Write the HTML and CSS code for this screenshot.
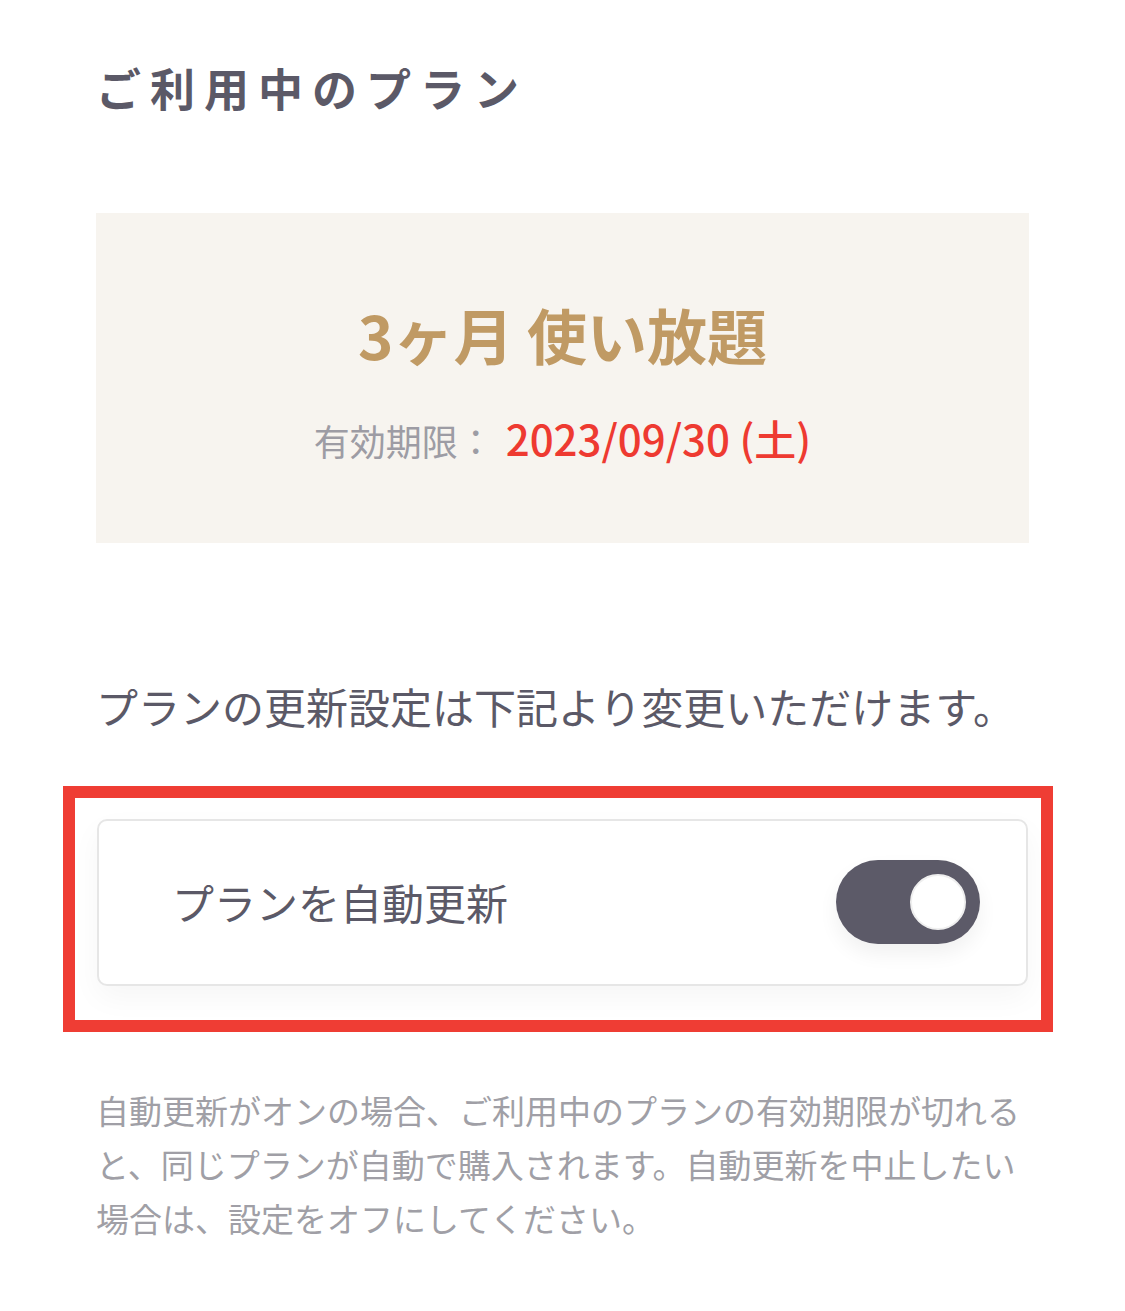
FILE: index.html
```html
<!DOCTYPE html>
<html lang="ja">

<head>
    <meta charset="UTF-8">
    <meta name="viewport" content="width=device-width, initial-scale=1.0">
    <title>ご利用中のプラン</title>
    <link rel="stylesheet" href="styles.css">
</head>

<body>
    <div class="page">
        <h1 class="page-title">ご利用中のプラン</h1>

        <div class="plan-box">
            <div class="plan-name">3ヶ月 使い放題</div>
            <div class="plan-expire">
                <span class="expire-label">有効期限：</span>
                <span class="expire-date">2023/09/30 (土)</span>
            </div>
        </div>

        <p class="lead">プランの更新設定は下記より変更いただけます。</p>

        <div class="highlight">
            <div class="setting-card">
                <span class="setting-label">プランを自動更新</span>
                <div class="toggle on">
                    <div class="toggle-knob"></div>
                </div>
            </div>
        </div>

        <p class="note">自動更新がオンの場合、ご利用中のプランの有効期限が切れると、同じプランが自動で購入されます。自動更新を中止したい場合は、設定をオフにしてください。</p>
    </div>
</body>

</html>
```

FILE: styles.css
```css
body {
    font-family: "Noto Sans CJK JP", "Noto Sans", sans-serif;
    background-color: #fff;
    margin: 0;
    padding: 0;
}

.page {
    padding: 0 96px 40px;
}

.page-title {
    margin: 0;
    padding-top: 58px;
    font-size: 45px;
    line-height: 60px;
    font-weight: 700;
    letter-spacing: 9px;
    color: #5b5967;
}

.plan-box {
    margin-top: 95px;
    padding: 81px 0 73px;
    background-color: #f7f4ef;
    text-align: center;
}

.plan-name {
    font-size: 60px;
    line-height: 80px;
    font-weight: 700;
    color: #c09a64;
}

.plan-expire {
    margin-top: 34px;
    display: flex;
    justify-content: center;
    align-items: baseline;
    line-height: 60px;
}

.expire-label {
    font-size: 36px;
    color: #9d9ca4;
}

.expire-date {
    margin-left: 12px;
    font-size: 42px;
    font-weight: 500;
    color: #ee3a31;
}

.lead {
    margin: 133px 0 0;
    font-size: 42px;
    line-height: 60px;
    color: #5b5967;
}

/* 注釈用の赤枠 */
.highlight {
    margin: 50px -24px 0 -33px;
    padding: 21px 13px 34px 22px;
    border: 12px solid #ef3d34;
}

.setting-card {
    display: flex;
    justify-content: space-between;
    align-items: center;
    padding: 39px 46px 40px 73px;
    border: 2px solid #e6e6e6;
    border-radius: 10px;
    background: #fff;
    box-shadow: 0 12px 30px rgba(0, 0, 0, 0.04);
}

.setting-label {
    font-size: 42px;
    line-height: 60px;
    color: #5b5967;
}

.toggle {
    width: 144px;
    height: 84px;
    box-sizing: border-box;
    padding: 14px;
    border-radius: 42px;
    background-color: #ccc;
    display: flex;
    box-shadow: 0 10px 20px rgba(0, 0, 0, 0.06);
}

.toggle.on {
    background-color: #5c5a68;
    justify-content: flex-end;
}

.toggle-knob {
    width: 56px;
    height: 56px;
    box-sizing: border-box;
    border-radius: 50%;
    background: #fff;
    border: 2px solid #efefef;
}

.note {
    margin: 51px 0 0;
    font-size: 33px;
    line-height: 54px;
    color: #a09fa6;
}
```
